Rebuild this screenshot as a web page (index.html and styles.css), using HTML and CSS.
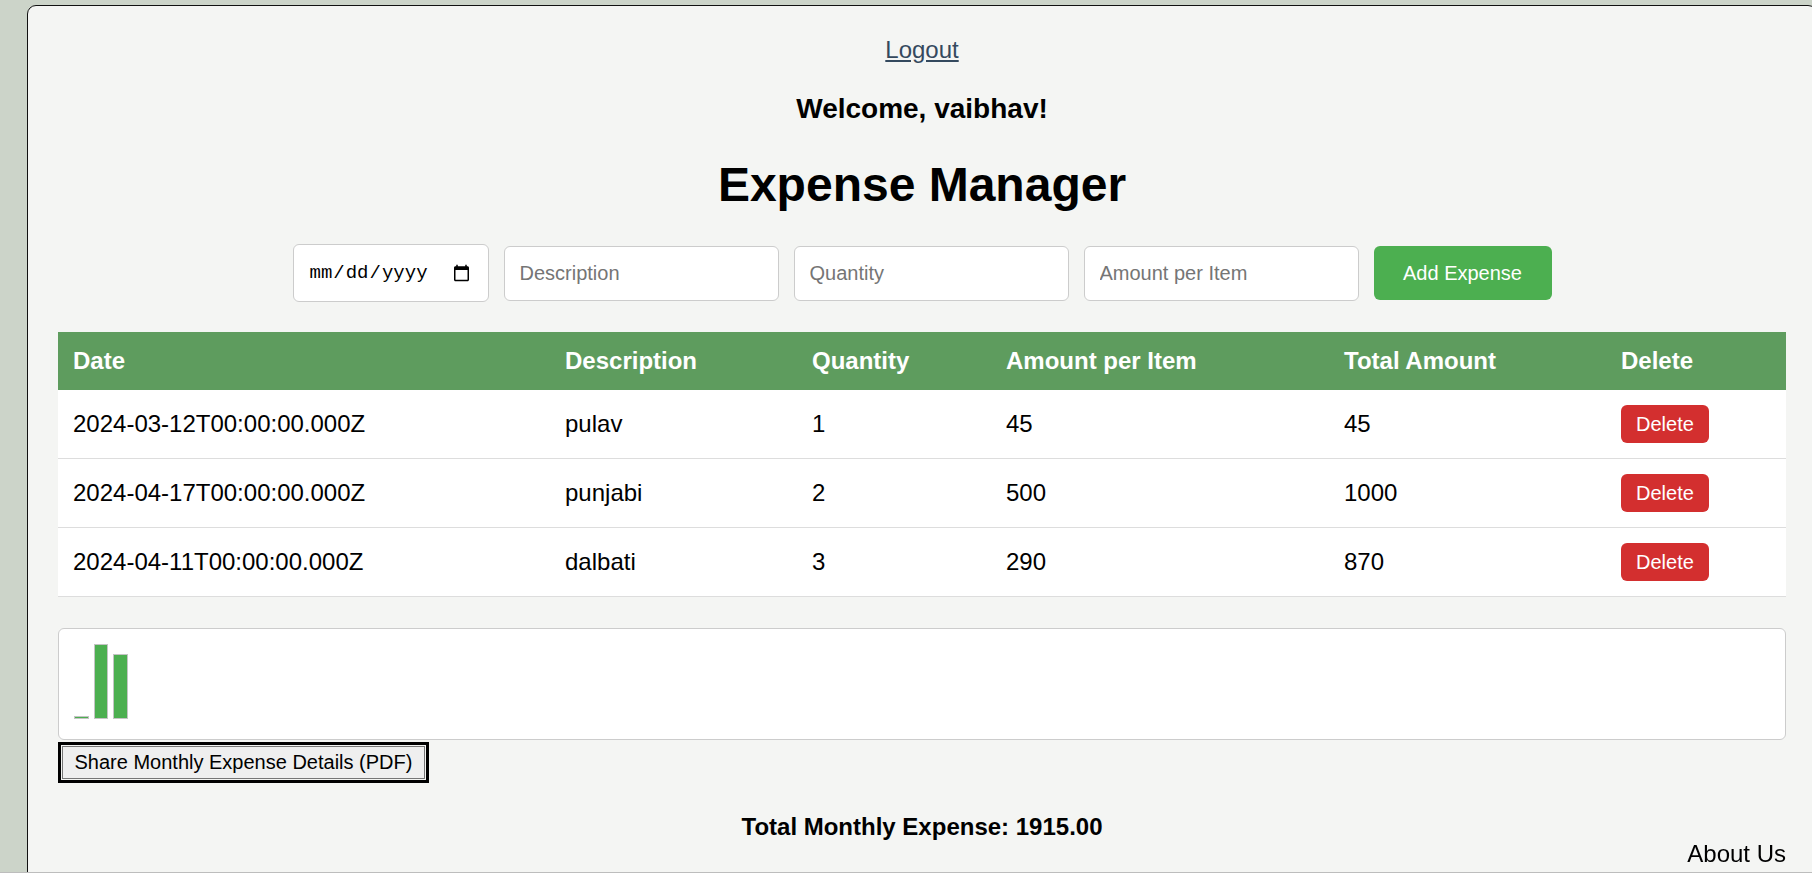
FILE: index.html
```html
<!DOCTYPE html>
<html lang="en">
<head>
<meta charset="utf-8">
<title>Expense Manager</title>
<link rel="stylesheet" href="styles.css">
</head>
<body>
<div class="page">
  <div class="top-nav"><a class="logout" href="#">Logout</a></div>
  <h3 class="welcome">Welcome, vaibhav!</h3>
  <h1 class="title">Expense Manager</h1>

  <form class="entry-row">
    <input class="field field-date" type="date">
    <input class="field field-text" type="text" placeholder="Description">
    <input class="field field-text" type="number" placeholder="Quantity">
    <input class="field field-text" type="number" placeholder="Amount per Item">
    <button class="btn-add" type="button">Add Expense</button>
  </form>

  <table class="expenses">
    <colgroup>
      <col class="c-date"><col class="c-desc"><col class="c-qty"><col class="c-amt"><col class="c-total"><col class="c-del">
    </colgroup>
    <thead>
      <tr><th>Date</th><th>Description</th><th>Quantity</th><th>Amount per Item</th><th>Total Amount</th><th>Delete</th></tr>
    </thead>
    <tbody>
      <tr><td>2024-03-12T00:00:00.000Z</td><td>pulav</td><td>1</td><td>45</td><td>45</td><td><button class="btn-del" type="button">Delete</button></td></tr>
      <tr><td>2024-04-17T00:00:00.000Z</td><td>punjabi</td><td>2</td><td>500</td><td>1000</td><td><button class="btn-del" type="button">Delete</button></td></tr>
      <tr><td>2024-04-11T00:00:00.000Z</td><td>dalbati</td><td>3</td><td>290</td><td>870</td><td><button class="btn-del" type="button">Delete</button></td></tr>
    </tbody>
  </table>

  <div class="chart">
    <div class="bar" style="height: 3.4px"></div>
    <div class="bar" style="height: 75px"></div>
    <div class="bar" style="height: 65.25px"></div>
  </div>
  <button class="btn-share" type="button">Share Monthly Expense Details (PDF)</button>

  <p class="total">Total Monthly Expense: 1915.00</p>
</div>
<footer class="footer"><a class="about" href="#">About Us</a></footer>
<div class="frame-edge"></div>
</body>
</html>
```
FILE: styles.css
```css
html {
  overflow: hidden;
}
body {
  margin: 0;
  background: #ccd4c9;
  font-family: "Liberation Sans", Arial, sans-serif;
  font-size: 24px;
  color: #000;
}
.page {
  box-sizing: border-box;
  width: 1790px;
  min-height: 920px;
  margin: 5px 0 0 27px;
  padding: 30px 30px 30px;
  background: #f4f5f3;
  border: 1px solid #111;
  border-radius: 9px;
}
.top-nav {
  text-align: center;
}
.logout {
  color: #34495e;
  text-decoration: underline;
}
.welcome {
  margin: 29px 0 28px;
  font-size: 28px;
  font-weight: bold;
  text-align: center;
}
.title {
  margin: 32px 0;
  font-size: 48px;
  font-weight: bold;
  text-align: center;
}
.entry-row {
  display: flex;
  justify-content: center;
  align-items: center;
  gap: 15px;
  margin: 32px 0 30px;
}
.field {
  box-sizing: border-box;
  background: #fff;
  border: 1px solid #ccc;
  border-radius: 6px;
  padding: 0 15px;
  font-family: "Liberation Sans", Arial, sans-serif;
  font-size: 20px;
  color: #000;
  margin: 0;
}
.field-date {
  width: 196px;
  height: 58px;
  font-family: "Liberation Mono", "DejaVu Sans Mono", monospace;
  font-size: 19px;
}
.field-text {
  width: 275px;
  height: 55px;
  -moz-appearance: textfield;
}
.field-text::-webkit-outer-spin-button,
.field-text::-webkit-inner-spin-button {
  -webkit-appearance: none;
  margin: 0;
}
.field::placeholder {
  color: #757575;
}
.btn-add {
  box-sizing: border-box;
  width: 178px;
  height: 54px;
  border: none;
  border-radius: 6px;
  background: #4caf50;
  color: #fff;
  font-family: "Liberation Sans", Arial, sans-serif;
  font-size: 20px;
  padding: 0;
  margin: 0;
  white-space: nowrap;
}
.expenses {
  width: 1728px;
  table-layout: fixed;
  border-collapse: collapse;
  background: #fff;
}
.c-date { width: 492px; }
.c-desc { width: 247px; }
.c-qty { width: 194px; }
.c-amt { width: 338px; }
.c-total { width: 277px; }
.c-del { width: 180px; }
.expenses th {
  background: #5e9c5e;
  color: #fff;
  font-weight: bold;
  text-align: left;
  padding: 15px;
  line-height: normal;
}
.expenses td {
  padding: 15px;
  border-bottom: 1px solid #ddd;
  vertical-align: middle;
  text-align: left;
}
.btn-del {
  display: block;
  box-sizing: border-box;
  height: 38px;
  padding: 0 15px;
  border: none;
  border-radius: 6px;
  background: #d32f2f;
  color: #fff;
  font-family: "Liberation Sans", Arial, sans-serif;
  font-size: 20px;
  line-height: 23px;
}
.chart {
  display: flex;
  align-items: flex-end;
  gap: 5px;
  margin-top: 31px;
  height: 75px;
  padding: 15px 15px 20px;
  background: #fff;
  border: 1px solid #ccc;
  border-radius: 6px;
}
.bar {
  box-sizing: border-box;
  width: 14.5px;
  background: #4caf50;
  border: 1px solid #c4c4c4;
}
.btn-share {
  display: block;
  margin: 6px 0 0 4px;
  padding: 4px 11.5px;
  border: 1px solid #767676;
  border-radius: 0;
  background: #efefef;
  color: #000;
  font-family: "Liberation Sans", Arial, sans-serif;
  font-size: 20px;
  line-height: 23px;
  outline: 3px solid #000;
  outline-offset: 1px;
}
.total {
  margin: 34px 0 0;
  font-weight: bold;
  text-align: center;
}
.footer {
  position: fixed;
  right: 26px;
  bottom: 5px;
}
.about {
  color: #000;
  text-decoration: none;
}
.frame-edge {
  position: fixed;
  left: 0;
  right: 0;
  bottom: 0;
  height: 1px;
  background: #bdbdbd;
}
```
